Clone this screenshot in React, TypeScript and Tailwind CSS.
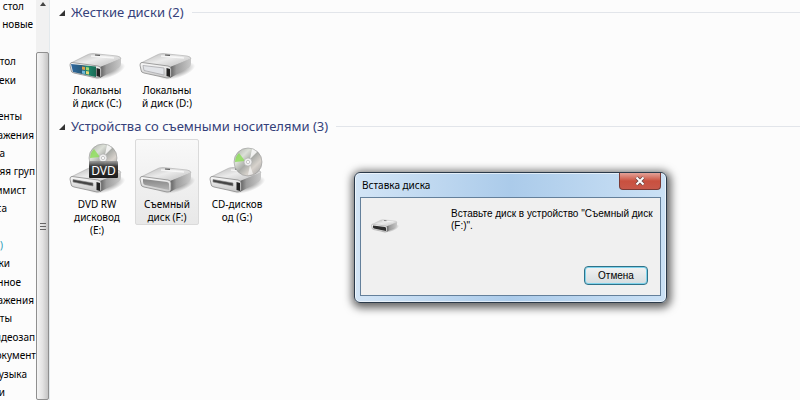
import { type ReactNode } from "react";

const treeRows = [
  { text: "стол", width: "w-[24px]" },
  { text: "новые", width: "w-[33px]" },
  { text: "", width: "w-0" },
  { text: "тол", width: "w-[16px]" },
  { text: "еки", width: "w-[16px]" },
  { text: "", width: "w-0" },
  { text: "енты", width: "w-[22px]" },
  { text: "ажения", width: "w-[34px]" },
  { text: "а", width: "w-[5px]" },
  { text: "яя груп", width: "w-[35px]" },
  { text: "имист", width: "w-[26px]" },
  { text: "са", width: "w-[7px]" },
  { text: "", width: "w-0" },
  { text: ")", width: "w-[3px]", active: true },
  { text: "ки", width: "w-[10px]" },
  { text: "нное", width: "w-[21px]" },
  { text: "ажения", width: "w-[34px]" },
  { text: "ты", width: "w-[12px]" },
  { text: "идеозап", width: "w-[35px]" },
  { text: "окумент", width: "w-[36px]" },
  { text: "узыка", width: "w-[27px]" },
  { text: "и", width: "w-[5px]" },
];

function Gradients() {
  return (
    <svg className="absolute size-0" aria-hidden="true">
      <defs>
        <linearGradient id="top" x1="0" y1="0" x2="1" y2="1">
          <stop offset="0" stopColor="#b4b4b4" />
          <stop offset="0.45" stopColor="#ebebeb" />
          <stop offset="1" stopColor="#b8b8b8" />
        </linearGradient>
        <linearGradient id="side" x1="0" y1="0" x2="1" y2="0">
          <stop offset="0" stopColor="#5c5c5c" />
          <stop offset="0.3" stopColor="#9c9c9c" />
          <stop offset="1" stopColor="#c8c8c8" />
        </linearGradient>
        <linearGradient id="front" x1="0" y1="0" x2="0" y2="1">
          <stop offset="0" stopColor="#fafafa" />
          <stop offset="1" stopColor="#c6c6c6" />
        </linearGradient>
        <linearGradient id="system" x1="0" y1="0" x2="1" y2="0">
          <stop offset="0" stopColor="#2f68a0" />
          <stop offset="0.45" stopColor="#285a78" />
          <stop offset="0.65" stopColor="#1f8a70" />
          <stop offset="1" stopColor="#1a6a54" />
        </linearGradient>
        <linearGradient id="slot" x1="0" y1="0" x2="0" y2="1">
          <stop offset="0" stopColor="#858585" />
          <stop offset="1" stopColor="#b4b4b4" />
        </linearGradient>
        <linearGradient id="disc" x1="0" y1="0" x2="1" y2="1">
          <stop offset="0" stopColor="#a2a6a0" />
          <stop offset="0.3" stopColor="#dce0d8" />
          <stop offset="0.5" stopColor="#a9aba7" />
          <stop offset="0.7" stopColor="#d8d3cd" />
          <stop offset="1" stopColor="#989898" />
        </linearGradient>
        <linearGradient id="badge" x1="0" y1="0" x2="0" y2="1">
          <stop offset="0" stopColor="#8a8a8a" stopOpacity="0.7" />
          <stop offset="0.3" stopColor="#3a3a3a" />
          <stop offset="1" stopColor="#1c1c1c" />
        </linearGradient>
        <radialGradient id="shadow">
          <stop offset="0" stopColor="#000" stopOpacity="0.5" />
          <stop offset="1" stopColor="#000" stopOpacity="0" />
        </radialGradient>
      </defs>
    </svg>
  );
}

type DriveKind = "system" | "local" | "optical" | "removable" | "empty";

function DriveBody({ kind }: { kind: DriveKind }) {
  const open = kind === "removable" || kind === "empty";

  return (
    <g>
      <ellipse cx="38" cy="41" rx="19" ry="7" fill="url(#shadow)" transform="rotate(-18 38 41)" />
      <path d="M2 33 L18 25 Q20 23.5 24 23.5 L48 26 Q52 26.5 52 29 L31 38Z" fill="url(#top)" stroke="#aaa" strokeWidth="0.6" />
      <path d="M31 37 L52 28.5 L52 34 Q52 36 50 37.5 L31 48Z" fill="url(#side)" />
      <path d="M3 32.5 L29 36 Q32 36.5 32 39 L32 46 Q31 48.5 28 48 L5 43 Q2 42.5 2 40 L1 35 Q1 32.5 3 32.5Z" fill="url(#front)" stroke="#8a8a8a" strokeWidth="0.8" />
      <path d="M22 26 L45 28" stroke="#fff" strokeWidth="1.4" opacity="0.7" />
      {kind === "system" && (
        <>
          <path d="M2 34 L27 36.5 L27 47 L4 42Z" fill="url(#system)" />
          <path d="M13 36.5 l3 .5 v3 l-3 -.5z" fill="#d9a04d" />
          <path d="M17 37 l3 .5 v3 l-3 -.5z" fill="#a4d66c" />
          <path d="M13 40.5 l3 .5 v3 l-3 -.5z" fill="#72b9da" />
          <path d="M17 41 l3 .5 v3 l-3 -.5z" fill="#e5d574" />
        </>
      )}
      {kind === "local" && (
        <path d="M4 35.5 L25 38 L25 45 L5 40.5Z" fill="#e2e4e8" stroke="#a9a9ad" strokeWidth="0.8" />
      )}
      {kind === "optical" && (
        <path d="M4 35.5 L24 39 L24 42 L4 38Z" fill="#444" stroke="#888" strokeWidth="0.6" />
      )}
      {open ? (
        <path
          d="M4 35 L28 38 Q30 38.5 30 40 L30 46 L6 41 Q4 40.5 4 38Z"
          fill={kind === "empty" ? "#2e2e2e" : "url(#slot)"}
        />
      ) : (
        <path d="M27.5 38 L31 39 L31 47 L27.5 46Z" fill="#222" />
      )}
      <path d="M26 25 L31 25.4" stroke="#555" strokeWidth="1.2" />
    </g>
  );
}

function Disc({ x, y }: { x: number; y: number }) {
  return (
    <g transform={`translate(${x} ${y})`}>
      <circle r="14" fill="url(#disc)" stroke="#999" strokeWidth="0.6" />
      <path d="M-3 -1 L-13 0 A13 13 0 0 1 -9 -9Z" fill="#86dd4d" opacity="0.75" />
      <path d="M2 -3 L4 -13 A14 14 0 0 1 9 -10Z" fill="#fff" opacity="0.8" />
      <path d="M2 3 L0 13 A13 13 0 0 0 5 12Z" fill="#fff" opacity="0.6" />
      <circle r="4" fill="#eee" stroke="#aaa" strokeWidth="0.6" />
      <circle r="1.6" fill="#fff" stroke="#999" strokeWidth="0.5" />
    </g>
  );
}

function DriveIcon({ kind, media }: { kind: DriveKind; media?: "dvd" | "cd" }) {
  return (
    <svg viewBox="0 0 56 54" className="h-[54px] w-14 shrink-0 overflow-visible" aria-hidden="true">
      {media === "dvd" && <Disc x={34} y={14} />}
      <DriveBody kind={kind} />
      {media === "cd" && <Disc x={39} y={18} />}
      {media === "dvd" && (
        <>
          <rect x="20" y="17" width="29" height="17" rx="1" fill="url(#badge)" />
          <text x="34.5" y="31" textAnchor="middle" fontSize="12" fill="#fff" fontFamily="Noto Sans, sans-serif">
            DVD
          </text>
        </>
      )}
    </svg>
  );
}

function Drive({ label, selected, children }: { label: string[]; selected?: boolean; children: ReactNode }) {
  return (
    <button
      type="button"
      className={`flex w-16 flex-col items-center rounded-xs border pt-1 text-center text-[10px] leading-[13px] ${
        selected ? "border-[#dadada] bg-linear-to-b from-[#f9f9f9] to-[#e8e8e8]" : "border-transparent"
      }`}
    >
      {children}
      {label.map((line) => (
        <span key={line} className="whitespace-nowrap">{line}</span>
      ))}
    </button>
  );
}

function DriveGroup({ title, children }: { title: string; children: ReactNode }) {
  return (
    <section>
      <h2 className="flex h-[25px] items-center pl-[9px] text-[13px] text-[#35417a]">
        <svg viewBox="0 0 6 6" className="mr-1.5 size-1.5" aria-hidden="true">
          <path d="M6 0 V6 H0Z" fill="#333" />
        </svg>
        {title}
        <span className="ml-2 h-px flex-1 bg-[#e2e5ea]" />
      </h2>
      <div className="flex items-start gap-1.5 pl-[15px]">{children}</div>
    </section>
  );
}

function InsertDiskDialog() {
  return (
    <div
      role="dialog"
      aria-labelledby="dialog-title"
      className="absolute top-[172px] left-[354px] w-[313px] rounded-md border border-[#2b3a4a] bg-linear-to-r from-[#d3e5f6] via-[#abcbea] to-[#cbe1f5] px-[5px] pb-1.5 shadow-[1px_2px_9px_3px_rgba(0,0,0,0.6)] ring-1 ring-white/60 ring-inset"
    >
      <div className="flex h-6 items-start justify-between">
        <h3 id="dialog-title" className="pt-1 pl-0.5 text-[10px] leading-4">Вставка диска</h3>
        <button
          type="button"
          aria-label="Закрыть"
          className="flex h-[17px] w-[42px] items-center justify-center rounded-b border border-t-0 border-[#7a3a35] bg-linear-to-b from-[#e3a298] via-[#c9503f] to-[#c8584a]"
        >
          <svg viewBox="0 0 12 10" className="h-2.5 w-3" aria-hidden="true">
            <path d="M2.5 1.5 L9.5 8.5 M9.5 1.5 L2.5 8.5" stroke="#6b4646" strokeWidth="3.6" />
            <path d="M2.5 1.5 L9.5 8.5 M9.5 1.5 L2.5 8.5" stroke="#fff" strokeWidth="2" />
          </svg>
        </button>
      </div>
      <div className="border border-[#64809b] bg-[#f0f0f0] pt-2.5 pr-3 pb-2.5 pl-2.5 font-['Liberation_Sans',sans-serif] text-[10px]">
        <div className="flex h-[58px] justify-between">
          <svg viewBox="0 20 56 32" className="mt-2.5 h-4 w-7" aria-hidden="true">
            <DriveBody kind="empty" />
          </svg>
          <p className="w-[197px] leading-3 whitespace-nowrap">
            Вставьте диск в устройство "Съемный диск
            <br />
            (F:)".
          </p>
        </div>
        <div className="flex justify-end">
          <button
            type="button"
            className="h-[19px] w-16 rounded-sm border border-[#2f7289] bg-linear-to-b from-[#f2f2f2] to-[#d5dde0] leading-none ring-1 ring-[#7fd3ec] ring-inset"
          >
            Отмена
          </button>
        </div>
      </div>
    </div>
  );
}

export default function App() {
  return (
    <div className="relative flex h-screen overflow-hidden bg-[#fcfcfc] font-['Noto_Sans','Open_Sans',sans-serif] text-black">
      <Gradients />
      <nav className="-mt-[3px] flex h-[404px] w-[36px] shrink-0 flex-col justify-between text-[10px] leading-[18px]">
        {treeRows.map((row, i) => (
          <div key={i} className={`flex h-[18px] justify-end whitespace-nowrap ${row.width} ${row.active ? "text-[#2a9ab5]" : ""}`}>
            {row.text}
          </div>
        ))}
      </nav>
      <div className="flex w-[14px] shrink-0 flex-col items-center border-r border-[#e3e9ec] bg-[#f1f1f1]">
        <svg viewBox="0 0 6 4" className="mt-0.5 h-1 w-1.5" aria-hidden="true">
          <path d="M3 0 L6 4 H0Z" fill="#444" />
        </svg>
        <div className="mt-[46px] flex w-full flex-1 items-center justify-center rounded-xs border border-[#8f8f8f] bg-linear-to-r from-[#f5f5f5] via-[#e3e3e3] to-[#c4c4c4]">
          <div className="flex h-[7px] w-1.5 flex-col justify-between">
            <div className="h-px bg-[#666]" />
            <div className="h-px bg-[#666]" />
            <div className="h-px bg-[#666]" />
          </div>
        </div>
      </div>
      <main className="flex min-w-0 flex-1 flex-col gap-[3px]">
        <DriveGroup title="Жесткие диски (2)">
          <Drive label={["Локальны", "й диск (C:)"]}>
            <DriveIcon kind="system" />
          </Drive>
          <Drive label={["Локальны", "й диск (D:)"]}>
            <DriveIcon kind="local" />
          </Drive>
        </DriveGroup>
        <DriveGroup title="Устройства со съемными носителями (3)">
          <Drive label={["DVD RW", "дисковод", "(E:)"]}>
            <DriveIcon kind="optical" media="dvd" />
          </Drive>
          <Drive label={["Съемный", "диск (F:)"]} selected>
            <DriveIcon kind="removable" />
          </Drive>
          <Drive label={["CD-дисков", "од (G:)"]}>
            <DriveIcon kind="optical" media="cd" />
          </Drive>
        </DriveGroup>
      </main>
      <InsertDiskDialog />
    </div>
  );
}
